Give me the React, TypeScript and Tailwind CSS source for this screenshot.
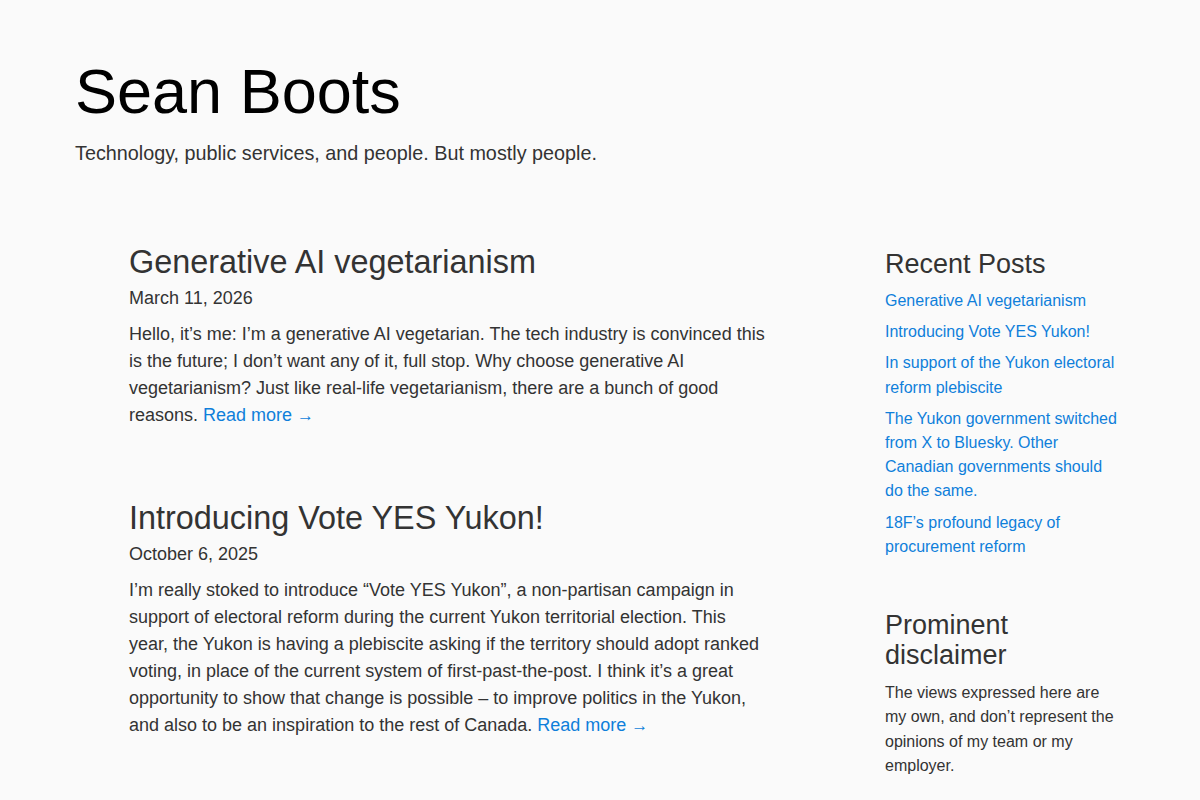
const posts = [
  {
    title: "Generative AI vegetarianism",
    date: "March 11, 2026",
    excerpt:
      "Hello, it’s me: I’m a generative AI vegetarian. The tech industry is convinced this is the future; I don’t want any of it, full stop. Why choose generative AI vegetarianism? Just like real-life vegetarianism, there are a bunch of good reasons.",
  },
  {
    title: "Introducing Vote YES Yukon!",
    date: "October 6, 2025",
    excerpt:
      "I’m really stoked to introduce “Vote YES Yukon”, a non-partisan campaign in support of electoral reform during the current Yukon territorial election. This year, the Yukon is having a plebiscite asking if the territory should adopt ranked voting, in place of the current system of first-past-the-post. I think it’s a great opportunity to show that change is possible – to improve politics in the Yukon, and also to be an inspiration to the rest of Canada.",
  },
];

const recent = [
  "Generative AI vegetarianism",
  "Introducing Vote YES Yukon!",
  "In support of the Yukon electoral reform plebiscite",
  "The Yukon government switched from X to Bluesky. Other Canadian governments should do the same.",
  "18F’s profound legacy of procurement reform",
];

export default function App() {
  return (
    <div
      className="min-h-screen bg-[#fafafa] text-[#333] px-[75px]"
      style={{ fontFamily: '"Liberation Sans", Arial, sans-serif' }}
    >
      {/* Header */}
      <header className="pt-[60px]">
        <h1 className="text-[63px] leading-none text-black">Sean Boots</h1>
        <p className="mt-[16px] text-[19.8px] leading-[28px]">
          Technology, public services, and people. But mostly people.
        </p>
      </header>

      <div className="flex mt-[76px]">
        {/* Posts */}
        <main className="ml-[54px] w-[638px] flex flex-col gap-[70px]">
          {posts.map((p) => (
            <article key={p.title}>
              <h2 className="text-[32.4px] leading-[38px]">
                <a href="#">{p.title}</a>
              </h2>
              <p className="mt-[4px] text-[18px] leading-[27px]">{p.date}</p>
              <p className="mt-[9px] text-[18px] leading-[27px]">
                {p.excerpt}{" "}
                <a href="#" className="text-[#0f7fda]">
                  Read more <span className="text-[17px]">→</span>
                </a>
              </p>
            </article>
          ))}
        </main>

        {/* Sidebar */}
        <aside className="ml-auto mr-[4px] w-[236px] pt-[6px]">
          <h3 className="text-[27px] leading-[30px]">Recent Posts</h3>
          <ul className="mt-[10px] flex flex-col gap-[7px]">
            {recent.map((r) => (
              <li key={r} className="text-[16px] leading-[24.2px]">
                <a href="#" className="text-[#0f7fda]">
                  {r}
                </a>
              </li>
            ))}
          </ul>

          <h3 className="mt-[51px] text-[27px] leading-[30px]">Prominent disclaimer</h3>
          <p className="mt-[11px] text-[16px] leading-[24.4px]">
            The views expressed here are my own, and don’t represent the opinions of my team or my
            employer.
          </p>
        </aside>
      </div>
    </div>
  );
}
